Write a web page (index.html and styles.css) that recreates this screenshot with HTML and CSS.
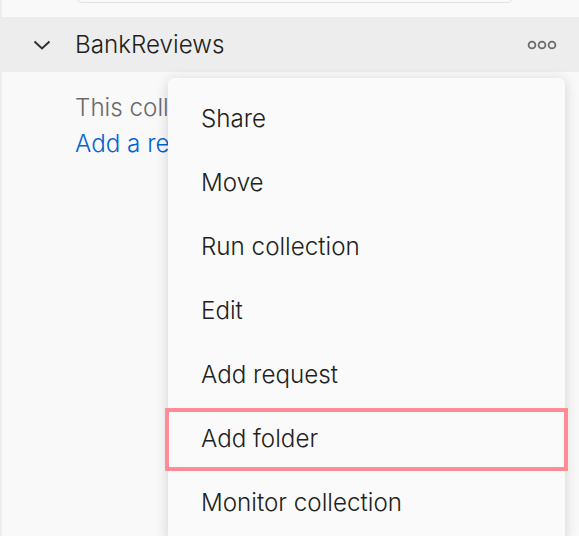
FILE: index.html
```html
<!DOCTYPE html>
<html>
<head>
<meta charset="utf-8">
<link rel="stylesheet" href="styles.css">
</head>
<body>
<div class="panel">
  <div class="top">
    <div class="search"></div>
  </div>
  <div class="collection-row">
    <svg class="chevron" width="18" height="10" viewBox="0 0 18 10"><path d="M1.5 1.5 L9 8.5 L16.5 1.5" fill="none" stroke="#303030" stroke-width="2"/></svg>
    <span class="name">BankReviews</span>
    <svg class="dots" width="30" height="10" viewBox="0 0 30 10"><circle cx="5" cy="5" r="3.4" fill="none" stroke="#6b6b6b" stroke-width="1.8"/><circle cx="15" cy="5" r="3.4" fill="none" stroke="#6b6b6b" stroke-width="1.8"/><circle cx="25" cy="5" r="3.4" fill="none" stroke="#6b6b6b" stroke-width="1.8"/></svg>
  </div>
  <div class="empty">
    <div class="empty-text">This collection is empty</div>
    <a class="empty-link">Add a request</a>
  </div>
  <div class="menu">
    <div class="item">Share</div>
    <div class="item">Move</div>
    <div class="item">Run collection</div>
    <div class="item">Edit</div>
    <div class="item">Add request</div>
    <div class="item highlighted">Add folder</div>
    <div class="item">Monitor collection</div>
  </div>
</div>
</body>
</html>
```
FILE: styles.css
```css
html, body {
  margin: 0;
  padding: 0;
  width: 579px;
  height: 536px;
  overflow: hidden;
  background: #ededed;
  font-family: Inter, "Noto Sans", sans-serif;
}
.panel {
  position: relative;
  margin-left: 2px;
  height: 536px;
  background: #f9f9f9;
}
.top {
  height: 17px;
  overflow: hidden;
}
.search {
  margin-left: 75px;
  width: 433px;
  height: 20px;
  margin-top: -19px;
  border: 1px solid #e4e4e4;
  border-radius: 4px;
}
.collection-row {
  height: 55px;
  margin-left: -2px;
  background: #ededed;
  display: flex;
  align-items: center;
  padding-left: 33px;
  padding-right: 22px;
}
.chevron {
  flex: none;
  margin-top: 1px;
}
.name {
  margin-left: 24px;
  font-size: 24.2px;
  font-weight: 300;
  color: #212121;
  flex: 1;
}
.dots {
  flex: none;
}
.empty {
  padding-left: 73px;
  padding-top: 18px;
  font-size: 24.2px;
  font-weight: 300;
  line-height: 36px;
  white-space: nowrap;
}
.empty-text {
  color: #6b6b6b;
}
.empty-link {
  color: #0265d2;
}
.menu {
  position: absolute;
  left: 166px;
  top: 78px;
  width: 397px;
  padding: 8px 0;
  background: #fafafa;
  border-radius: 6px;
  box-shadow: 0 2px 14px rgba(0, 0, 0, 0.16);
}
.item {
  position: relative;
  height: 64px;
  display: flex;
  align-items: center;
  padding-left: 33px;
  font-size: 24.2px;
  font-weight: 300;
  color: #212121;
}
.highlighted::after {
  content: "";
  position: absolute;
  left: -3px;
  right: -3px;
  top: 2px;
  bottom: -1px;
  border: 4px solid #ff8c96;
}
```
